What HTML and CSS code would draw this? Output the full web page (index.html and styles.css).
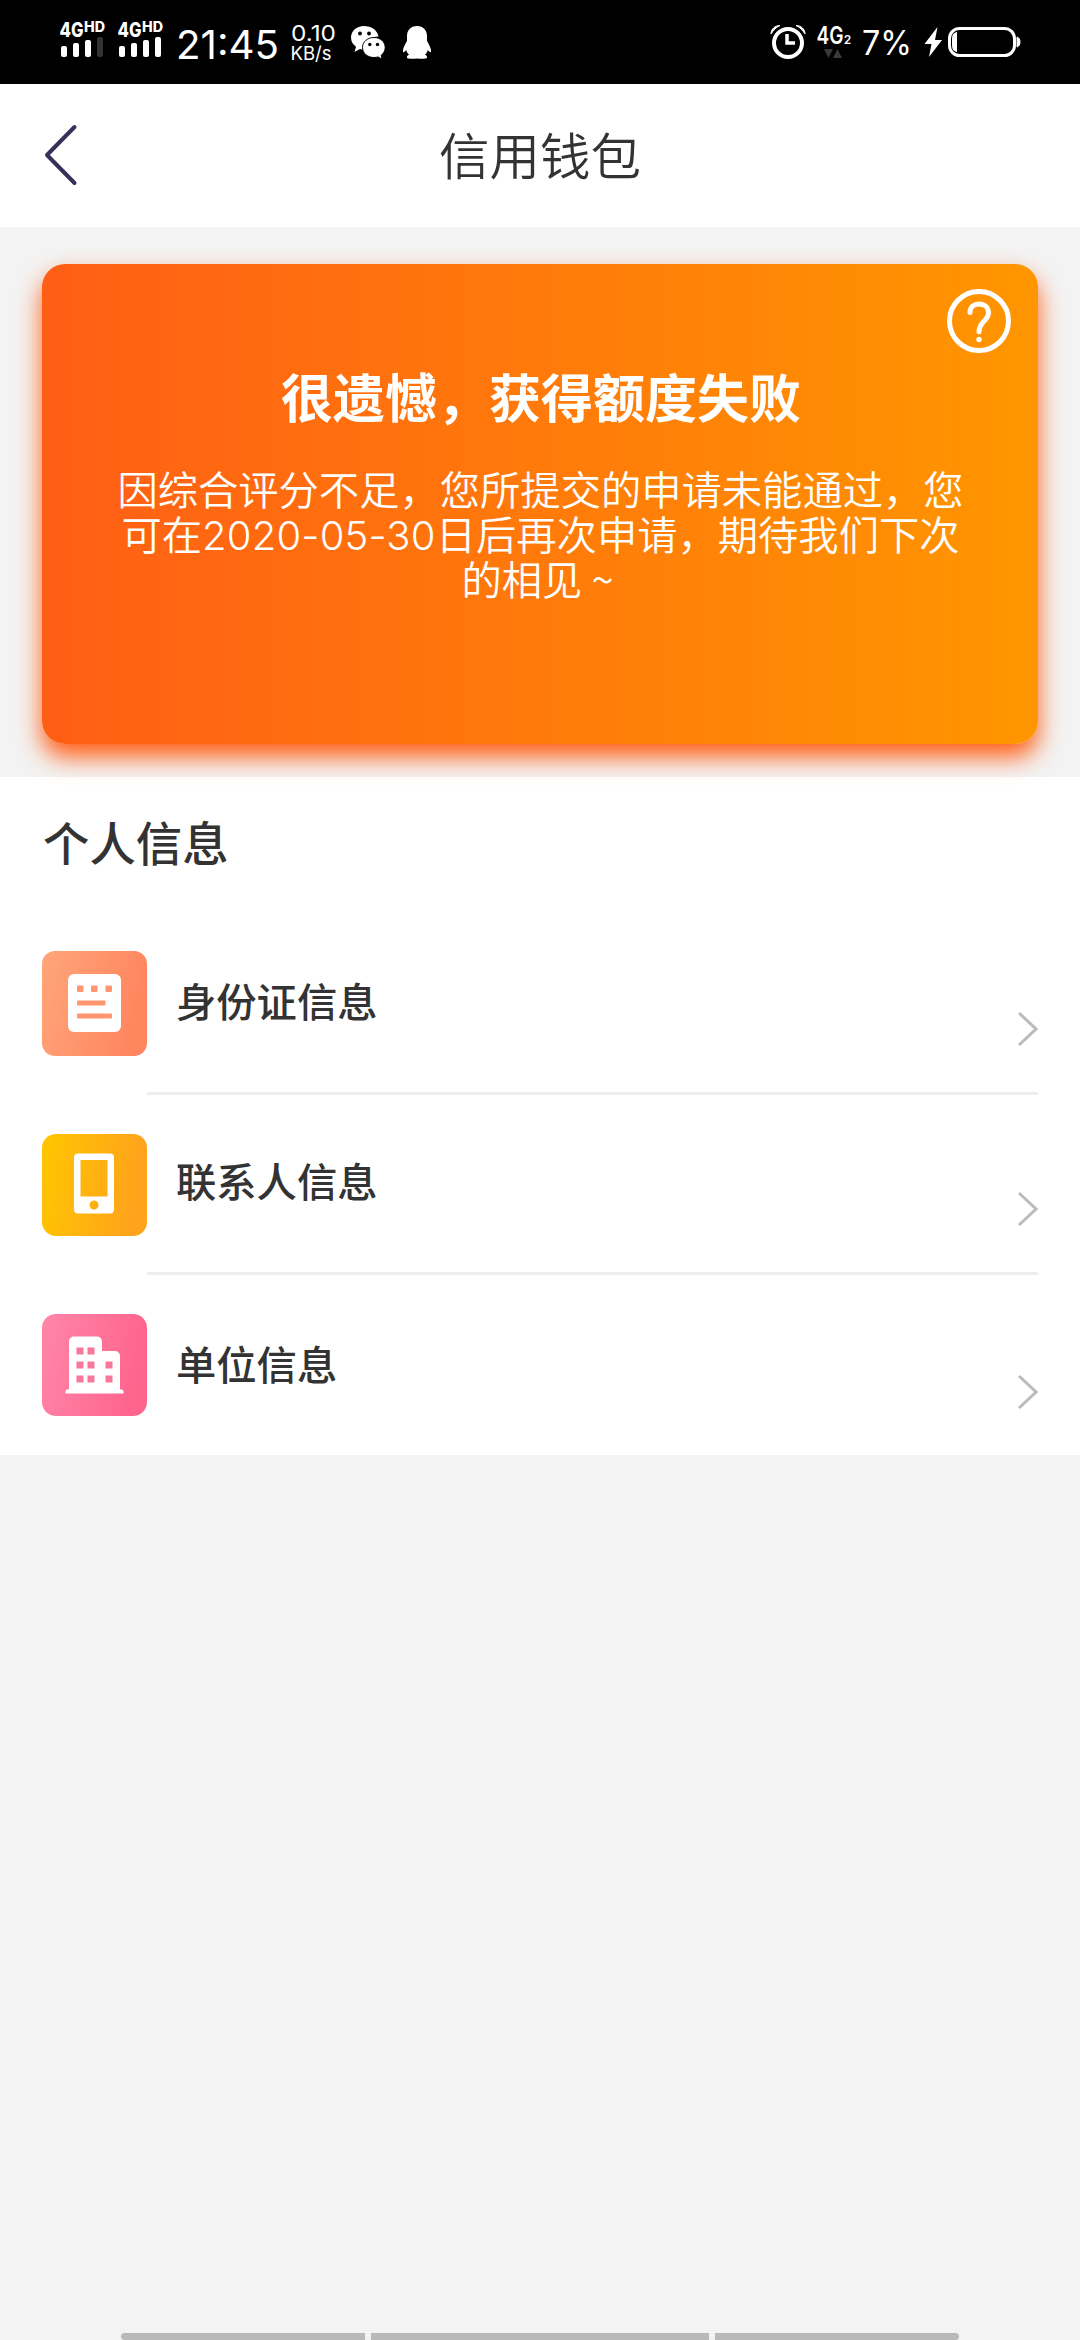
FILE: index.html
```html
<!DOCTYPE html>
<html lang="zh-CN">
<head>
<meta charset="utf-8">
<title>信用钱包</title>
<link rel="stylesheet" href="styles.css">
</head>
<body>
<div class="screen">
  <div class="status">
    <svg class="status-left" width="440" height="84" viewBox="0 0 440 84" fill="#fff">
      <g class="signal">
        <text x="59.500" y="36.5" font-size="20" textLength="24" lengthAdjust="spacingAndGlyphs">4G</text>
        <text x="84" y="32" font-size="14" textLength="21" lengthAdjust="spacingAndGlyphs">HD</text>
        <rect x="61" y="46" width="6" height="11" rx="2"/><rect x="73" y="43" width="6" height="14" rx="2"/><rect x="85" y="40" width="6" height="17" rx="2"/><rect x="97" y="37" width="6" height="20" rx="2" fill="#333"/>
      </g>
      <g class="signal" transform="translate(58 0)">
        <text x="59.500" y="36.5" font-size="20" textLength="24" lengthAdjust="spacingAndGlyphs">4G</text>
        <text x="84" y="32" font-size="14" textLength="21" lengthAdjust="spacingAndGlyphs">HD</text>
        <rect x="61" y="46" width="6" height="11" rx="2"/><rect x="73" y="43" width="6" height="14" rx="2"/><rect x="85" y="40" width="6" height="17" rx="2"/><rect x="97" y="37" width="6" height="20" rx="2"/>
      </g>
      <text x="176" y="59" font-size="40" textLength="103" lengthAdjust="spacingAndGlyphs">21:45</text>
      <text x="291" y="41" font-size="21.5" textLength="45" lengthAdjust="spacingAndGlyphs">0.10</text>
      <text x="290.500" y="60" font-size="19" textLength="41" lengthAdjust="spacingAndGlyphs">KB/s</text>
      <path d="M364 26c-7.500 0-13 5-13 11.500 0 3.700 1.800 7 5 9.200L354.500 52l5.500-3c2 .6 4 .7 6 .6 0-8 5-13 12.500-13C377.500 30 371 26 364 26z"/>
      <path d="M374 37.500c-6.500 0-11.500 4.300-11.500 10S367.500 57.500 374 57.500c1.500 0 2.800-.2 4-.6l4 2.300-.8-4c2.500-1.800 4-4.500 4-7.700 0-5.700-4.800-10-11.200-10z" stroke="#000" stroke-width="1"/>
      <g fill="#000"><circle cx="360" cy="33.500" r="1.900"/><circle cx="369" cy="33.500" r="1.900"/><circle cx="369.800" cy="44.500" r="1.700"/><circle cx="377.500" cy="44.500" r="1.700"/></g>
      <path d="M417 26c-6.500 0-10 4.500-10 10v5c-2 3.500-4.500 8-4 11 .7.700 2.300-1 3.200-2 .5 2 1.600 3.500 2.800 4.700-1.500.6-2.300 1.600-2 3 .2 1 4.500 1.400 10 .8 5.500.6 9.800.2 10-.8.300-1.400-.5-2.400-2-3 1.200-1.200 2.300-2.700 2.800-4.700.9 1 2.500 2.700 3.200 2 .5-3-2-7.500-4-11v-5c0-5.500-3.500-10-10-10z"/>
    </svg>
    <svg class="status-right" width="340" height="84" viewBox="740 0 340 84" fill="#fff">
      <circle cx="788" cy="43" r="14" fill="none" stroke="#fff" stroke-width="4"/>
      <path d="M787 34v9h8" fill="none" stroke="#fff" stroke-width="3.500"/>
      <path d="M771 34c0-5 4-8.500 9-8.500-4 2-7 5-9 8.500zM805 34c0-5-4-8.500-9-8.500 4 2 7 5 9 8.500z" stroke="#fff"/>
      <text x="816.500" y="44" font-size="24" font-weight="600" textLength="27" lengthAdjust="spacingAndGlyphs">4G</text>
      <text x="843.700" y="44" font-size="12" font-weight="600">2</text>
      <path d="M824 49h9l-4.500 9zM833 58h9l-4.500-9z" fill="#3a3a3a"/>
      <text x="862" y="55" font-size="33.500" textLength="50" lengthAdjust="spacingAndGlyphs">7%</text>
      <path d="M937.500 27L924.500 44h7L929 57l13-17h-7z"/>
      <rect x="949.500" y="28.500" width="65" height="27" rx="10" fill="none" stroke="#fff" stroke-width="3"/>
      <path d="M957 32v20c-5-1-5-4-5-10s0-9 5-10z"/>
      <path d="M1017 37c4 1 4 9 0 10z" stroke="#fff"/>
    </svg>
  </div>

  <header class="header">
    <svg class="back" width="36" height="64" viewBox="0 0 36 64"><path d="M32.500 4L5 32l27.500 28"/></svg>
    <h1 class="header-title">信用钱包</h1>
  </header>

  <main>
    <section class="hero">
      <div class="card">
        <svg class="help" width="66" height="66" viewBox="0 0 66 66"><circle cx="33" cy="33" r="29.500"/><path d="M24 24.500c0-6 4.500-8.500 9-8.500 5.500 0 9.500 3.500 9.500 8.700 0 8.300-9.500 8.500-9.500 19"/><circle class="dot" cx="33" cy="51.500" r="2.700"/></svg>
        <h2 class="card-title">很遗憾，获得额度失败</h2>
        <p class="card-text">
          <span class="line">因综合评分不足，您所提交的申请未能通过，您</span>
          <span class="line">可在<span class="date">2020-05-30</span>日后再次申请，期待我们下次</span>
          <span class="line last">的相见 ~</span>
        </p>
      </div>
    </section>

    <section class="info">
      <h2 class="info-title">个人信息</h2>
      <div class="row">
        <svg class="icon" width="105" height="105" viewBox="0 0 105 105">
          <defs><linearGradient id="peach" x2="1" y2=".25"><stop stop-color="#ffa57a"/><stop offset="1" stop-color="#ff865f"/></linearGradient></defs>
          <rect width="105" height="105" rx="13" fill="url(#peach)"/>
          <rect x="26" y="23" width="53" height="58" rx="6" fill="#fff"/>
          <g fill="#ff9670"><rect x="35" y="34.500" width="6.500" height="6.500" rx="1"/><rect x="49" y="34.500" width="6.500" height="6.500" rx="1"/><rect x="63.500" y="34.500" width="6.500" height="6.500" rx="1"/><rect x="35" y="49.500" width="28.500" height="5" rx="1"/><rect x="35" y="62.500" width="35" height="5" rx="1"/></g>
        </svg>
        <div class="row-body"><span class="label">身份证信息</span><svg class="arrow" width="22" height="36" viewBox="0 0 22 36"><path d="M3 2l17 16L3 34"/></svg></div>
      </div>
      <div class="row low-icon">
        <svg class="icon" width="105" height="102" viewBox="0 0 105 102">
          <defs><linearGradient id="amber" x2="1" y2=".15"><stop stop-color="#ffc600"/><stop offset="1" stop-color="#ffa21c"/></linearGradient></defs>
          <rect width="105" height="102" rx="14" fill="url(#amber)"/>
          <path fill="#fff" fill-rule="evenodd" d="M36 19.500h32a4 4 0 0 1 4 4v52a4 4 0 0 1-4 4H36a4 4 0 0 1-4-4v-52a4 4 0 0 1 4-4zM38.500 26v36.500h27V26zM52 66.500a4.500 4.500 0 1 0 .01 0z"/>
        </svg>
        <div class="row-body"><span class="label">联系人信息</span><svg class="arrow" width="22" height="36" viewBox="0 0 22 36"><path d="M3 2l17 16L3 34"/></svg></div>
      </div>
      <div class="row low-icon low-text">
        <svg class="icon" width="105" height="102" viewBox="0 0 105 102">
          <defs><linearGradient id="pink" x2="1" y2=".2"><stop stop-color="#ff86a9"/><stop offset="1" stop-color="#ff648d"/></linearGradient></defs>
          <rect width="105" height="102" rx="14" fill="url(#pink)"/>
          <path fill="#fff" d="M32 22.500h23a5 5 0 0 1 5 5V37h13a5 5 0 0 1 5 5v33.500h2.500l1 2v2h-58v-2l1-2H27v-48a5 5 0 0 1 5-5z"/>
          <g fill="#f9779b"><path d="M34.500 33.500h7v7h-7zM45.500 33.500h7v7h-7zM34.500 47.500h7v7h-7zM45.500 47.500h7v7h-7zM63.500 47.500h7v7h-7zM34.500 61.500h7v7h-7zM45.500 61.500h7v7h-7zM63.500 61.500h7v7h-7z"/></g>
        </svg>
        <div class="row-body"><span class="label">单位信息</span><svg class="arrow" width="22" height="36" viewBox="0 0 22 36"><path d="M3 2l17 16L3 34"/></svg></div>
      </div>
    </section>
  </main>

  <div class="nav"><i></i><i class="home"></i><i></i></div>
</div>
</body>
</html>
```
FILE: styles.css
```css
* { box-sizing: border-box; }
body { margin: 0; background: #f3f3f3; color: #333; font-family: "Noto Sans CJK SC", sans-serif; }
h1, h2, p { margin: 0; }
.screen { display: flex; flex-direction: column; width: 1080px; height: 2340px; overflow: hidden; }
svg { display: block; flex: none; }

.status { display: flex; justify-content: space-between; height: 84px; background: #000; font-family: Inter, Roboto, sans-serif; }
.signal { font-weight: 800; }

.header { display: grid; grid-template-columns: 120px 1fr 120px; align-items: center; height: 143px; padding-bottom: 1px; background: #fff; }
.back { margin-left: 42px; }
.back path { fill: none; stroke: #34325a; stroke-width: 4; stroke-linecap: round; stroke-linejoin: round; }
.header-title { padding-bottom: 4px; text-align: center; font-size: 50.5px; line-height: 60px; font-weight: 350; }

.hero { height: 550px; padding: 37px 42px 0; }
.card {
  position: relative;
  height: 480px;
  padding-top: 102px;
  border-radius: 23px;
  background: linear-gradient(90deg, #ff5e15, #ff9600);
  box-shadow: 0 13px 24px #ff5f17;
  color: #fff;
  text-align: center;
}
.help { position: absolute; top: 24px; right: 26px; }
.help circle, .help path { fill: none; stroke: #fff; stroke-width: 5; stroke-linecap: round; }
.help .dot { fill: #fff; stroke: none; }
.card-title { padding-left: 2px; font-size: 52px; line-height: 60px; font-weight: 700; }
.card-text { margin-top: 39px; font-size: 40.3px; line-height: 45px; font-weight: 350; }
.line { display: block; height: 45px; padding-left: 1px; white-space: nowrap; }
.last { padding-right: 6px; }
.date { font-family: Inter, sans-serif; font-size: 40px; line-height: 1; letter-spacing: 0.2px; }

.info { height: 678px; padding: 0 42px; background: #fff; }
.info-title { height: 138px; padding: 34px 0 0 1px; font-size: 46.400px; line-height: 60px; font-weight: 500; }
.row { display: flex; height: 180px; }
.icon { margin-top: 36px; }
.low-icon .icon { margin-top: 39px; }
.row-body { display: flex; flex: 1; justify-content: space-between; padding: 55px 0 0 29px; border-bottom: 3px solid #eee; }
.low-text .row-body { padding-top: 58px; border: 0; }
.label { font-size: 40.3px; line-height: 60px; font-weight: 500; }
.arrow { margin-top: 41px; }
.arrow path { fill: none; stroke: #bbb; stroke-width: 3; }

.nav { display: flex; gap: 6px; height: 7px; margin-top: auto; padding: 0 121px; }
.nav i { flex: 0 0 244px; background: #b9b9b9; }
.nav .home { flex: 1; }
.nav i:first-child { border-radius: 4px 0 0 4px; }
.nav i:last-child { border-radius: 0 4px 4px 0; }
```
